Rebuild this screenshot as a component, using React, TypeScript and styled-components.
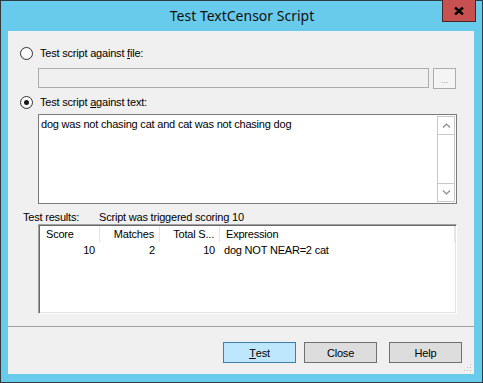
import { createGlobalStyle } from 'styled-components';
import styled from 'styled-components';

const GlobalStyle = createGlobalStyle`
  html, body {
    margin: 0;
    padding: 0;
    background: #ffffff;
  }
  body {
    font-family: "Liberation Sans", Arial, sans-serif;
    font-size: 11px;
    letter-spacing: -0.2px;
    color: #000;
  }
`;

const Window = styled.div`
  width: 483px;
  height: 383px;
  box-sizing: border-box;
  border: 1px solid #2f3b40;
  background: #69cbeb;
  display: flex;
  flex-direction: column;
`;

const TitleBar = styled.div`
  position: relative;
  height: 30px;
  display: flex;
  align-items: center;
  justify-content: center;
  padding-left: 1px;
`;

const Title = styled.div`
  font-family: "Noto Sans", "Open Sans", sans-serif;
  font-size: 14px;
  letter-spacing: 0;
  color: #111;
  margin-top: -1px;
`;

const CloseButton = styled.div`
  position: absolute;
  top: -1px;
  right: 6px;
  width: 34px;
  height: 22px;
  box-sizing: border-box;
  background: #c75050;
  border: 1px solid #4a2323;
  border-top: none;
  display: flex;
  align-items: center;
  justify-content: center;
`;

const Body = styled.div`
  padding: 0 8px 8px 7px;
  flex: 1;
  display: flex;
`;

const Client = styled.div`
  position: relative;
  flex: 1;
  background: #f0f0f0;
  display: flex;
  flex-direction: column;
`;

const RadioRow = styled.div<{ $top: number }>`
  display: flex;
  align-items: center;
  gap: 7px;
  margin-top: ${(p) => p.$top}px;
  padding-left: 12px;
  height: 13px;
`;

const Radio = styled.span<{ $checked?: boolean }>`
  width: 13px;
  height: 13px;
  box-sizing: border-box;
  border-radius: 50%;
  border: 1px solid #333;
  background: radial-gradient(circle at 50% 40%, #ffffff 40%, #e6e6e6 100%);
  display: flex;
  align-items: center;
  justify-content: center;
  &::after {
    content: '';
    display: ${(p) => (p.$checked ? 'block' : 'none')};
    width: 5px;
    height: 5px;
    border-radius: 50%;
    background: #1a1a1a;
  }
`;

const Label = styled.span`
  line-height: 13px;
  white-space: nowrap;
`;

const FileRow = styled.div`
  display: flex;
  gap: 4px;
  margin: 8px 0 0 30px;
`;

const FileInput = styled.div`
  width: 391px;
  height: 20px;
  box-sizing: border-box;
  border: 1px solid #adadad;
  background: #f0f0f0;
`;

const BrowseButton = styled.div`
  width: 23px;
  height: 21px;
  box-sizing: border-box;
  border: 1px solid #adadad;
  background: #f4f4f4;
  color: #a0a0a0;
  font-size: 9px;
  display: flex;
  align-items: center;
  justify-content: center;
  padding-top: 2px;
`;

const TextBox = styled.div`
  margin: 5px 0 0 30px;
  width: 419px;
  height: 90px;
  box-sizing: border-box;
  border: 1px solid #7a7a7a;
  background: #fff;
  display: flex;
`;

const TextContent = styled.div`
  flex: 1;
  padding: 3px 2px;
  line-height: 13px;
`;

const ScrollBar = styled.div`
  width: 18px;
  margin: 1px;
  box-sizing: border-box;
  border: 1px solid #c8c8c8;
  display: flex;
  flex-direction: column;
  justify-content: space-between;
  background: #fff;
`;

const ScrollArrow = styled.div<{ $down?: boolean }>`
  height: 17px;
  display: flex;
  align-items: center;
  justify-content: center;
  border-bottom: ${(p) => (p.$down ? 'none' : '1px solid #c8c8c8')};
  border-top: ${(p) => (p.$down ? '1px solid #c8c8c8' : 'none')};
`;

const ResultsRow = styled.div`
  display: flex;
  margin: 7px 0 0 15px;
  line-height: 13px;
`;

const ResultsLabel = styled.span`
  width: 76px;
`;

const ListView = styled.div`
  margin: 0 0 0 30px;
  width: 419px;
  height: 90px;
  box-sizing: border-box;
  border: 1px solid;
  border-color: #a0a0a0 #ffffff #ffffff #a0a0a0;
  box-shadow: inset 1px 1px 0 #696969, inset -1px -1px 0 #e3e3e3;
  background: #fff;
  padding: 1px;
`;

const Grid = styled.div`
  display: grid;
  grid-template-columns: 60px 60px 60px 1fr;
`;

const HeaderCell = styled.div<{ $align: 'left' | 'right' }>`
  height: 16px;
  line-height: 16px;
  border-right: 1px solid #e5e5e5;
  text-align: ${(p) => p.$align};
  padding: 0 5px 0 6px;
  white-space: nowrap;
  overflow: hidden;
`;

const Cell = styled.div<{ $align: 'left' | 'right' }>`
  height: 16px;
  line-height: 16px;
  text-align: ${(p) => p.$align};
  padding: 0 5px 0 4px;
  white-space: nowrap;
`;

const Separator = styled.div`
  margin-top: 12px;
  height: 1px;
  background: #a0a0a0;
`;

const ButtonRow = styled.div`
  display: flex;
  justify-content: flex-end;
  margin-top: 15px;
  padding-right: 12px;
`;

const Button = styled.div<{ $default?: boolean; $gap: number }>`
  width: 73px;
  height: 21px;
  box-sizing: border-box;
  margin-left: ${(p) => p.$gap}px;
  border: 1px solid ${(p) => (p.$default ? '#3c7fb1' : '#707070')};
  background: ${(p) => (p.$default ? '#bee6fd' : '#dddddd')};
  display: flex;
  align-items: center;
  justify-content: center;
`;

const Grip = styled.svg`
  position: absolute;
  right: 2px;
  bottom: 2px;
`;

function Chevron({ down }: { down?: boolean }) {
  return (
    <svg width="9" height="5" viewBox="0 0 9 5">
      <polyline
        points={down ? '1,0.5 4.5,4 8,0.5' : '1,4.5 4.5,1 8,4.5'}
        fill="none"
        stroke="#8a8a8a"
        strokeWidth="1.2"
      />
    </svg>
  );
}

export default function App() {
  return (
    <>
      <GlobalStyle />
      <Window>
        <TitleBar>
          <Title>Test TextCensor Script</Title>
          <CloseButton>
            <svg width="10" height="8" viewBox="0 0 10 8">
              <path d="M1 0.5 L9 7.5 M9 0.5 L1 7.5" stroke="#000" strokeWidth="2.4" />
            </svg>
          </CloseButton>
        </TitleBar>
        <Body>
          <Client>
            <RadioRow $top={16}>
              <Radio />
              <Label>
                Test script against <u>f</u>ile:
              </Label>
            </RadioRow>
            <FileRow>
              <FileInput />
              <BrowseButton>...</BrowseButton>
            </FileRow>
            <RadioRow $top={7}>
              <Radio $checked />
              <Label>
                Test script <u>a</u>gainst text:
              </Label>
            </RadioRow>
            <TextBox>
              <TextContent>dog was not chasing cat and cat was not chasing dog</TextContent>
              <ScrollBar>
                <ScrollArrow>
                  <Chevron />
                </ScrollArrow>
                <ScrollArrow $down>
                  <Chevron down />
                </ScrollArrow>
              </ScrollBar>
            </TextBox>
            <ResultsRow>
              <ResultsLabel>Test results:</ResultsLabel>
              <span>Script was triggered scoring 10</span>
            </ResultsRow>
            <ListView>
              <Grid>
                <HeaderCell $align="left">Score</HeaderCell>
                <HeaderCell $align="right">Matches</HeaderCell>
                <HeaderCell $align="right">Total S...</HeaderCell>
                <HeaderCell $align="left">Expression</HeaderCell>
                <Cell $align="right">10</Cell>
                <Cell $align="right">2</Cell>
                <Cell $align="right">10</Cell>
                <Cell $align="left">dog NOT NEAR=2 cat</Cell>
              </Grid>
            </ListView>
            <Separator />
            <ButtonRow>
              <Button $default $gap={0}>
                <u>T</u>est
              </Button>
              <Button $gap={8}>Close</Button>
              <Button $gap={12}>Help</Button>
            </ButtonRow>
            <Grip width="8" height="8" viewBox="0 0 8 8">
              <rect x="6" y="0" width="1" height="1" fill="#b8b8b8" />
              <rect x="3" y="3" width="1" height="1" fill="#b8b8b8" />
              <rect x="6" y="3" width="1" height="1" fill="#b8b8b8" />
              <rect x="0" y="6" width="1" height="1" fill="#b8b8b8" />
              <rect x="3" y="6" width="1" height="1" fill="#b8b8b8" />
              <rect x="6" y="6" width="1" height="1" fill="#b8b8b8" />
            </Grip>
          </Client>
        </Body>
      </Window>
    </>
  );
}
